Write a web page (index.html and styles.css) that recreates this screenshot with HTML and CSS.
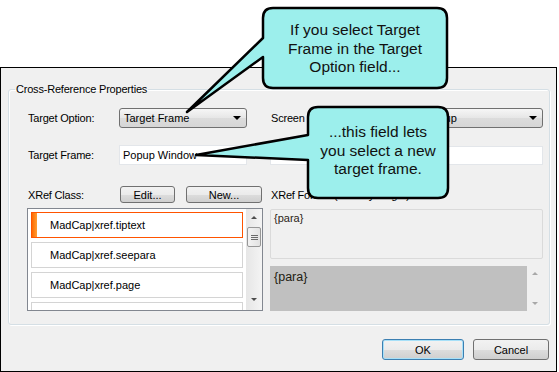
FILE: index.html
```html
<!DOCTYPE html>
<html>
<head>
<meta charset="utf-8">
<link rel="stylesheet" href="styles.css">
</head>
<body>
<div class="dialog">
  <fieldset class="group">
    <legend>Cross-Reference Properties</legend>
    <div class="gbody">
      <div class="col">
        <div class="row r1"><span class="lbl">Target Option:</span><div class="combo w128">Target Frame<span class="arrow"></span></div></div>
        <div class="row r2"><span class="lbl">Target Frame:</span><div class="edit w128">Popup Window<span class="arrow faint"></span></div></div>
        <div class="row r3"><span class="lbl lbl3">XRef Class:</span><button class="btn edit-btn">Edit...</button><button class="btn new-btn">New...</button></div>
        <div class="list">
          <div class="items">
            <div class="item sel">MadCap|xref.tiptext</div>
            <div class="item">MadCap|xref.seepara</div>
            <div class="item">MadCap|xref.page</div>
            <div class="item"></div>
          </div>
          <div class="vscroll">
            <span class="up"></span>
            <span class="thumb"><i></i><i></i><i></i></span>
            <span class="down"></span>
          </div>
        </div>
      </div>
      <div class="col">
        <div class="row r1"><span class="lbl rlbl">Screen Position:</span><div class="combo grow">Popup<span class="arrow"></span></div></div>
        <div class="row r2"><div class="edit full"></div></div>
        <div class="row r3"><span class="lbl">XRef Format (Primary Target):</span></div>
        <div class="preview1">{para}</div>
        <div class="preview2">
          <div class="gray">{para}</div>
          <div class="vscroll light"><span class="up"></span><span class="down"></span></div>
        </div>
      </div>
    </div>
  </fieldset>
  <div class="footer">
    <button class="btn ok">OK</button>
    <button class="btn cancel">Cancel</button>
  </div>
</div>

<svg class="callouts" width="559" height="372" viewBox="0 0 559 372">
  <path d="M273 8 H437 Q447 8 447 18 V78 Q447 88 437 88 H273 Q263 88 263 78 V57 L187 112 L263 38 V18 Q263 8 273 8 Z" />
  <path d="M318 107 H438 Q448 107 448 117 V188 Q448 198 438 198 H318 Q308 198 308 188 V160 L196 155 L308 135 V117 Q308 107 318 107 Z" />
</svg>
<div class="ctext c1">If you select Target<br>Frame in the Target<br>Option field...</div>
<div class="ctext c2">...this field lets<br>you select a new<br>target frame.</div>
</body>
</html>
```
FILE: styles.css
```css
body {
  margin: 0;
  background: #fff;
  font-family: "Liberation Sans", Arial, sans-serif;
  font-size: 11px;
  color: #000;
}

.dialog {
  margin-top: 67px;
  width: 557px;
  height: 305px;
  box-sizing: border-box;
  border: 1px solid #000;
  background: #f0f0f0;
  display: flex;
  flex-direction: column;
}

.group {
  margin: 14px 0 0 7px;
  width: 542px;
  box-sizing: border-box;
  border: 1px solid #d5dfe5;
  border-radius: 3px;
  padding: 0;
  min-width: 0;
  box-shadow: inset 1px 1px 0 #fff, 1px 1px 0 #fff;
}

.group legend {
  margin-left: 6px;
  padding: 0 1px;
  font-size: 11px;
  line-height: 14px;
  letter-spacing: -0.2px;
}

.gbody {
  padding: 12px 6px 13px 18px;
  display: grid;
  grid-template-columns: 236px 273px;
  column-gap: 7px;
}

.col {
  display: flex;
  flex-direction: column;
}

.row {
  display: flex;
  align-items: center;
}

.r1 { height: 20px; }
.r2 { height: 20px; margin-top: 17px; }
.r3 { height: 17px; margin-top: 21px; }

.lbl {
  width: 91px;
  padding-left: 1px;
  flex: none;
  white-space: nowrap;
  letter-spacing: -0.2px;
}
.lbl3 { width: 92px; }
.rlbl { width: 149px; }

.combo {
  height: 20px;
  box-sizing: border-box;
  border: 1px solid #707070;
  border-radius: 3px;
  background: linear-gradient(#f6f6f6, #e6e6e6 50%, #dcdcdc 51%, #d6d6d6);
  display: flex;
  align-items: center;
  padding: 0 5px 0 4px;
}
.w128 { width: 128px; }
.grow { flex: 1; }

.arrow {
  margin-left: auto;
  width: 0;
  height: 0;
  border-left: 4px solid transparent;
  border-right: 4px solid transparent;
  border-top: 4px solid #000;
}
.arrow.faint { border-top-color: #c8c8c8; }

.edit {
  height: 20px;
  box-sizing: border-box;
  border: 1px solid #e3e6ea;
  background: #fff;
  display: flex;
  align-items: center;
  padding: 0 5px 0 3px;
}
.edit.full { width: 273px; height: 19px; }

.btn {
  height: 17px;
  box-sizing: border-box;
  border: 1px solid #707070;
  border-radius: 3px;
  background: linear-gradient(#f2f2f2, #ebebeb 50%, #dddddd 51%, #cfcfcf);
  font-family: "Liberation Sans", Arial, sans-serif;
  font-size: 11px;
  color: #000;
  padding: 0;
  margin: 0;
}
.edit-btn { width: 55px; }
.new-btn { width: 76px; margin-left: 11px; }

.list {
  margin-top: 5px;
  height: 103px;
  box-sizing: border-box;
  border: 1px solid #828790;
  background: #fff;
  display: flex;
}

.items {
  width: 212px;
  margin-left: 3px;
  padding-top: 3px;
  display: flex;
  flex-direction: column;
  gap: 4px;
  overflow: hidden;
}

.item {
  flex: none;
  height: 26px;
  box-sizing: border-box;
  border: 1px solid #d4d4d4;
  padding-left: 18px;
  display: flex;
  align-items: center;
  background: #fff;
}
.item.sel {
  border-color: #ff5400;
  background: linear-gradient(to right, #ff6a00 0, #ff9d33 5px, #fff 5px);
}

.vscroll {
  margin-left: 3px;
  width: 16px;
  background: linear-gradient(to right, #e6e6e6, #f4f4f4);
  display: flex;
  flex-direction: column;
  align-items: center;
  position: relative;
}
.vscroll .up,
.vscroll .down {
  width: 0;
  height: 0;
  border-left: 3px solid transparent;
  border-right: 3px solid transparent;
}
.vscroll .up {
  margin-top: 7px;
  border-bottom: 3px solid #4d4d4d;
}
.vscroll .down {
  margin-top: auto;
  margin-bottom: 9px;
  border-top: 3px solid #4d4d4d;
}
.vscroll .thumb {
  margin-top: 8px;
  width: 14px;
  height: 20px;
  box-sizing: border-box;
  border: 1px solid #979797;
  border-radius: 2px;
  background: linear-gradient(to right, #f3f3f3, #e2e2e2);
  display: flex;
  flex-direction: column;
  align-items: center;
  justify-content: center;
  gap: 1px;
}
.vscroll .thumb i {
  display: block;
  width: 7px;
  height: 1px;
  background: #6a6a6a;
}

.preview1 {
  margin-top: 6px;
  height: 50px;
  box-sizing: border-box;
  border: 1px solid #dadada;
  border-radius: 2px;
  background: #f0f0f0;
  padding: 1px 3px;
  line-height: 14px;
  color: #2a2316;
}

.preview2 {
  margin-top: 7px;
  height: 45px;
  display: flex;
}
.preview2 .gray {
  width: 257px;
  background: #c0c0c0;
  font-size: 12.5px;
  line-height: 15px;
  padding: 4px 4px;
  box-sizing: border-box;
  color: #221c10;
}
.vscroll.light {
  margin-left: 0;
  background: #f0f0f0;
}
.vscroll.light .up { margin-top: 6px; border-bottom-color: #a8a8a8; }
.vscroll.light .down { margin-bottom: 6px; border-top-color: #a8a8a8; }

.footer {
  margin-top: 14px;
  display: flex;
  justify-content: flex-end;
  gap: 9px;
  padding-right: 7px;
}
.footer .btn { height: 21px; }
.ok {
  width: 82px;
  border-color: #3c7fb1;
  box-shadow: inset 0 0 0 1px #a7e0f8;
}
.cancel { width: 76px; }

.callouts {
  position: absolute;
  left: 0;
  top: 0;
  pointer-events: none;
}
.callouts path {
  fill: #9cefec;
  stroke: #000;
  stroke-width: 2.5;
  stroke-linejoin: round;
}

.ctext {
  position: absolute;
  text-align: center;
  font-family: "Liberation Sans", Arial, sans-serif;
  font-size: 15.5px;
  line-height: 18.5px;
  color: #111;
}
.c1 { left: 263px; top: 21px; width: 184px; }
.c2 { left: 308px; top: 123px; width: 140px; }
```
